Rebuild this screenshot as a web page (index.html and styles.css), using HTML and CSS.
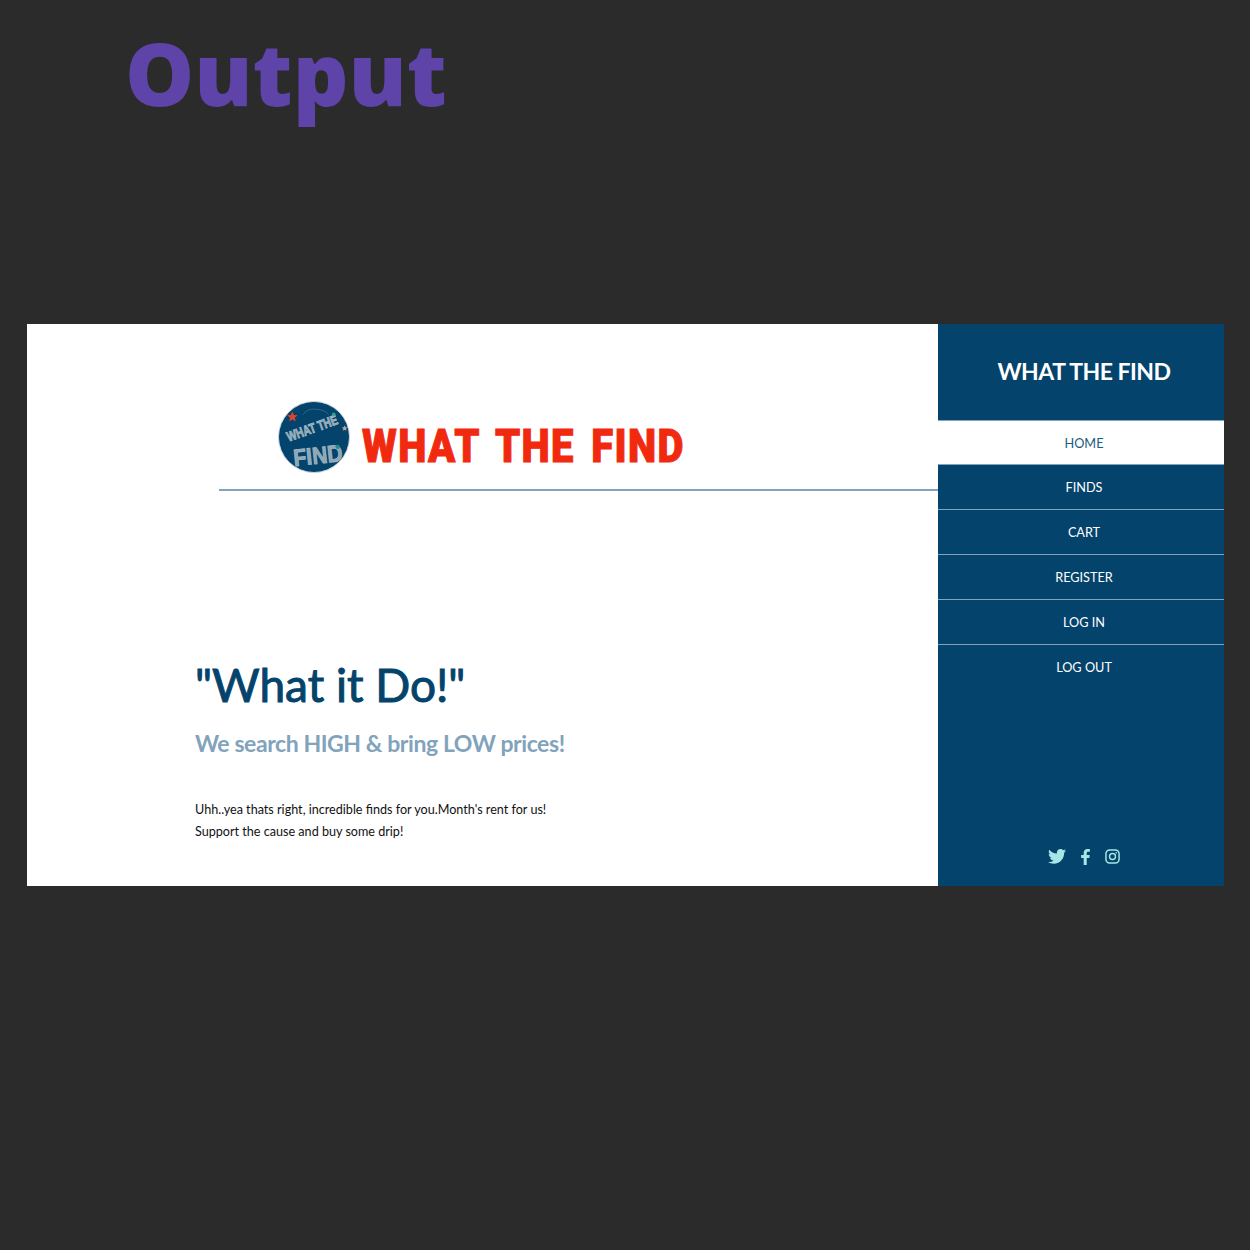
FILE: index.html
```html
<!DOCTYPE html>
<html lang="en">
<head>
<meta charset="utf-8">
<title>What The Find</title>
<link rel="stylesheet" href="styles.css">
</head>
<body>
<h1 class="output-title">Output</h1>
<div class="frame">
  <main class="content">
    <div class="brand">
      <svg class="badge" width="72" height="72" viewBox="0.500 0.500 73 73">
        <circle cx="37" cy="37" r="36" fill="#04436b" stroke="#c9d6df" stroke-width="1"/>
        <path d="M15 11l1.600 3.600 3.900.3-3 2.500 1 3.800-3.400-2-3.300 2 .9-3.800-3-2.500 3.900-.3z" fill="#d9452f"/>
        <path d="M68 25l.9 2 2.100.2-1.600 1.400.5 2.100-1.900-1.100-1.800 1.100.5-2.100-1.600-1.400 2.100-.2z" fill="#b9a9a3"/>
        <path d="M26 14q6-7 13-5q8 0 13 5" fill="none" stroke="#2d6a8c" stroke-width="1"/>
        <text class="badge-top" x="35" y="33" transform="rotate(-20 35 28)" text-anchor="middle" textLength="54" lengthAdjust="spacingAndGlyphs">WHAT THE</text>
        <text class="badge-bottom" x="41" y="64" transform="rotate(-6 41 56)" text-anchor="middle" textLength="50" lengthAdjust="spacingAndGlyphs">FIND</text>
        <circle cx="57" cy="14" r="1.800" fill="#2ba58f"/>
        <circle cx="61" cy="47" r="2.200" fill="#1f8f86"/>
      </svg>
      <span class="wordmark">WHAT THE FIND</span>
    </div>
    <div class="rule"></div>
    <section class="hero">
      <h2 class="hero-title">"What it Do!"</h2>
      <h3 class="hero-sub">We search HIGH &amp; bring LOW prices!</h3>
      <p class="hero-text">Uhh..yea thats right, incredible finds for you.Month's rent for us!<br>Support the cause and buy some drip!</p>
    </section>
  </main>
  <aside class="sidebar">
    <div class="side-head">WHAT THE FIND</div>
    <nav class="side-nav">
      <a class="nav-item nav-active">HOME</a>
      <a class="nav-item">FINDS</a>
      <a class="nav-item">CART</a>
      <a class="nav-item">REGISTER</a>
      <a class="nav-item">LOG IN</a>
      <a class="nav-item">LOG OUT</a>
    </nav>
    <div class="socials">
      <svg class="social" width="18" height="15" viewBox="0 0 24 20"><path fill="#a5e6e6" d="M21.500 5c0 .2 0 .4 0 .6C21.500 12 16.600 19.500 7.600 19.500c-2.800 0-5.300-.8-7.500-2.200.4 0 .8.100 1.200.100 2.300 0 4.400-.8 6.100-2.100-2.200 0-4-1.500-4.600-3.400.3 0 .6.100.9.100.4 0 .9-.1 1.300-.2C2.700 11.300 1 9.300 1 6.900v-.1c.7.400 1.400.6 2.200.6C1.900 6.600 1 5.100 1 3.400c0-.9.200-1.700.7-2.500C4.100 3.900 7.800 5.900 11.900 6.100c-.1-.4-.1-.7-.1-1.100 0-2.700 2.200-4.900 4.900-4.900 1.400 0 2.700.6 3.600 1.500 1.100-.2 2.200-.6 3.100-1.200-.4 1.200-1.100 2.100-2.100 2.700 1-.1 1.900-.4 2.800-.8-.7 1-1.500 1.900-2.600 2.700z"/></svg>
      <svg class="social" width="9" height="16" viewBox="0 0 12 22"><path fill="#a5e6e6" d="M3.500 22V12.500H0V8.400h3.500V5.500C3.500 2 5.700 0 8.800 0c1.500 0 2.800.1 3.200.2v3.700H9.800C8.100 3.900 7.700 4.800 7.700 6v2.400h4.100l-.5 4.100H7.700V22z"/></svg>
      <svg class="social" width="15" height="15" viewBox="0 0 16 16"><rect x="1" y="1" width="14" height="14" rx="4" fill="none" stroke="#a5e6e6" stroke-width="1.600"/><circle cx="8" cy="8" r="3.200" fill="none" stroke="#a5e6e6" stroke-width="1.500"/><circle cx="12" cy="4" r=".9" fill="#a5e6e6"/></svg>
    </div>
  </aside>
</div>
</body>
</html>
```
FILE: styles.css
```css
* { box-sizing: border-box; }
html, body { margin: 0; padding: 0; }
body {
  background: #2b2b2b;
  width: 1250px;
  height: 1250px;
  overflow: hidden;
  padding: 19px 26px 0 27px;
  font-family: "Lato", sans-serif;
}
.output-title {
  margin: 0 0 0 98px;
  height: 305px;
  font-family: "Open Sans", sans-serif;
  font-weight: 800;
  font-size: 87px;
  line-height: 107px;
  color: #5e43a8;
}
.frame {
  display: flex;
  width: 1197px;
  height: 562px;
  background: #fff;
}
.content {
  flex: 1;
  min-width: 0;
  padding-top: 77px;
  display: flex;
  flex-direction: column;
}
.brand {
  display: flex;
  align-items: center;
  gap: 12px;
  padding-left: 251px;
  height: 72px;
}
.badge { flex: none; overflow: visible; }
.badge-top {
  font-family: "Liberation Sans", sans-serif;
  font-weight: 700;
  font-size: 14px;
  fill: #8ea7b5;
  stroke: #a3bac6;
  stroke-width: .8;
}
.badge-bottom {
  font-family: "Liberation Sans", sans-serif;
  font-weight: 700;
  font-size: 24px;
  fill: #8ea7b5;
  stroke: #a3bac6;
  stroke-width: .8;
}
.wordmark {
  font-family: "Roboto", sans-serif;
  font-weight: 900;
  font-size: 46px;
  line-height: 46px;
  letter-spacing: 1.600px;
  word-spacing: 5.700px;
  color: #f0290f;
  white-space: nowrap;
  transform: scaleX(.87);
  transform-origin: left center;
  -webkit-text-stroke: 1px #f0290f;
  position: relative;
  top: 9px;
}
.rule {
  margin: 16px 0 0 192px;
  height: 2px;
  background: #81a3bb;
}
.hero {
  padding: 166px 0 0 168px;
}
.hero-title {
  margin: 0;
  font-weight: 400;
  font-size: 46px;
  line-height: 56px;
  color: #04436b;
  -webkit-text-stroke: 1px #04436b;
}
.hero-sub {
  margin: 15px 0 0;
  font-weight: 700;
  font-size: 23px;
  line-height: 30px;
  letter-spacing: -.42px;
  color: #81a3bb;
}
.hero-text {
  margin: 41px 0 0;
  font-size: 12.6px;
  line-height: 22px;
  color: #111;
}
.sidebar {
  flex: none;
  width: 286px;
  display: flex;
  flex-direction: column;
  background: #04436b;
  color: #fff;
}
.side-head {
  height: 96px;
  display: flex;
  align-items: center;
  justify-content: center;
  font-weight: 700;
  font-size: 23px;
  letter-spacing: -.5px;
  padding: 0 0 2px 6px;
}
.side-nav {
  display: flex;
  flex-direction: column;
}
.nav-item {
  height: 45px;
  display: flex;
  align-items: center;
  justify-content: center;
  font-size: 12.7px;
  color: #fff;
  border-top: 1px solid #81a3bb;
  padding-left: 6px;
}
.nav-active {
  height: 44px;
  background: #fff;
  color: #1a5a84;
}
.socials {
  margin-top: auto;
  height: 60px;
  display: flex;
  justify-content: center;
  align-items: flex-start;
  gap: 15px;
  padding: 23px 0 0 6px;
}
```
